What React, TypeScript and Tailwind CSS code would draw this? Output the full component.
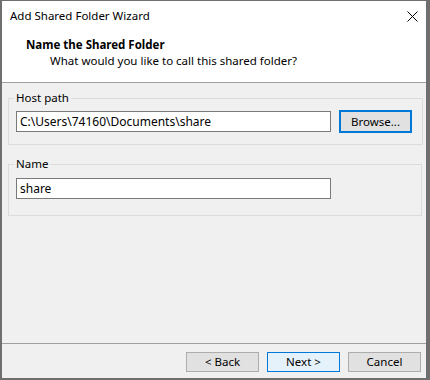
const font = { fontFamily: '"Segoe UI", "Noto Sans", sans-serif' };

const CloseIcon = () => (
  <svg width="11" height="11" viewBox="0 0 11 11" className="block">
    <path d="M0.5 0.5 L10.5 10.5 M10.5 0.5 L0.5 10.5" stroke="#000" strokeWidth="1" fill="none" />
  </svg>
);

const Button = ({ label, variant = "normal" }: { label: string; variant?: "normal" | "default" | "focused" }) => {
  const styles = {
    normal: "border border-[#adadad] bg-[#e1e1e1]",
    default: "border border-[#0078d7] bg-[#e5f1fb]",
    focused: "border-2 border-[#0078d7] bg-[#e1e1e1]",
  }[variant];
  return (
    <button
      type="button"
      className={`flex-1 flex items-center justify-center text-[11.5px] leading-none text-black ${styles}`}
    >
      {label}
    </button>
  );
};

export default function App() {
  return (
    <div className="w-[430px] h-[380px] bg-[#6f6f6f] pl-[2px] pt-[1px] overflow-hidden" style={font}>
      <div className="w-[424px] h-[377px] flex flex-col bg-[#f0f0f0]">
        {/* title bar */}
        <div className="h-[30px] bg-white flex items-center justify-between pl-[8px] pr-[8px]">
          <span className="text-[11.5px] text-black">Add Shared Folder Wizard</span>
          <CloseIcon />
        </div>

        {/* header */}
        <div className="h-[51px] bg-white pt-[6px] pl-[24px] text-[11.5px] leading-[16px] text-black">
          <div className="font-bold">Name the Shared Folder</div>
          <div className="pl-[24px]">What would you like to call this shared folder?</div>
        </div>
        <div className="h-px bg-[#a0a0a0]" />

        {/* body */}
        <div className="flex-1 flex flex-col pl-[6px] pr-[4px]">
          <fieldset className="mt-[8px] border border-[#dcdcdc] pl-[7px] pr-[10px] pt-[5px] pb-[11px]">
            <legend className="ml-[-2px] px-[2px] text-[11.5px] leading-[14px] text-black">Host path</legend>
            <div className="flex items-center gap-[8px]">
              <div className="w-[315px] h-[21px] border border-[#7a7a7a] bg-white flex items-center px-[3px] text-[12px] text-black">
                C:\Users\74160\Documents\share
              </div>
              <div className="w-[73px] h-[23px] flex">
                <Button label="Browse..." variant="focused" />
              </div>
            </div>
          </fieldset>

          <fieldset className="mt-[12px] border border-[#dcdcdc] pl-[7px] pr-[10px] pt-[7px] pb-[16px]">
            <legend className="ml-[-2px] px-[2px] text-[11.5px] leading-[14px] text-black">Name</legend>
            <div className="w-[315px] h-[21px] border border-[#7a7a7a] bg-white flex items-center px-[3px] text-[12px] text-black">
              share
            </div>
          </fieldset>
        </div>

        {/* footer */}
        <div className="h-px bg-[#a0a0a0]" />
        <div className="h-[34px] flex justify-end gap-[8px] pt-[8px] pb-[6px] pr-[5px]">
          <div className="w-[73px] flex"><Button label="< Back" /></div>
          <div className="w-[73px] flex"><Button label="Next >" variant="default" /></div>
          <div className="w-[73px] flex"><Button label="Cancel" /></div>
        </div>
      </div>
    </div>
  );
}
